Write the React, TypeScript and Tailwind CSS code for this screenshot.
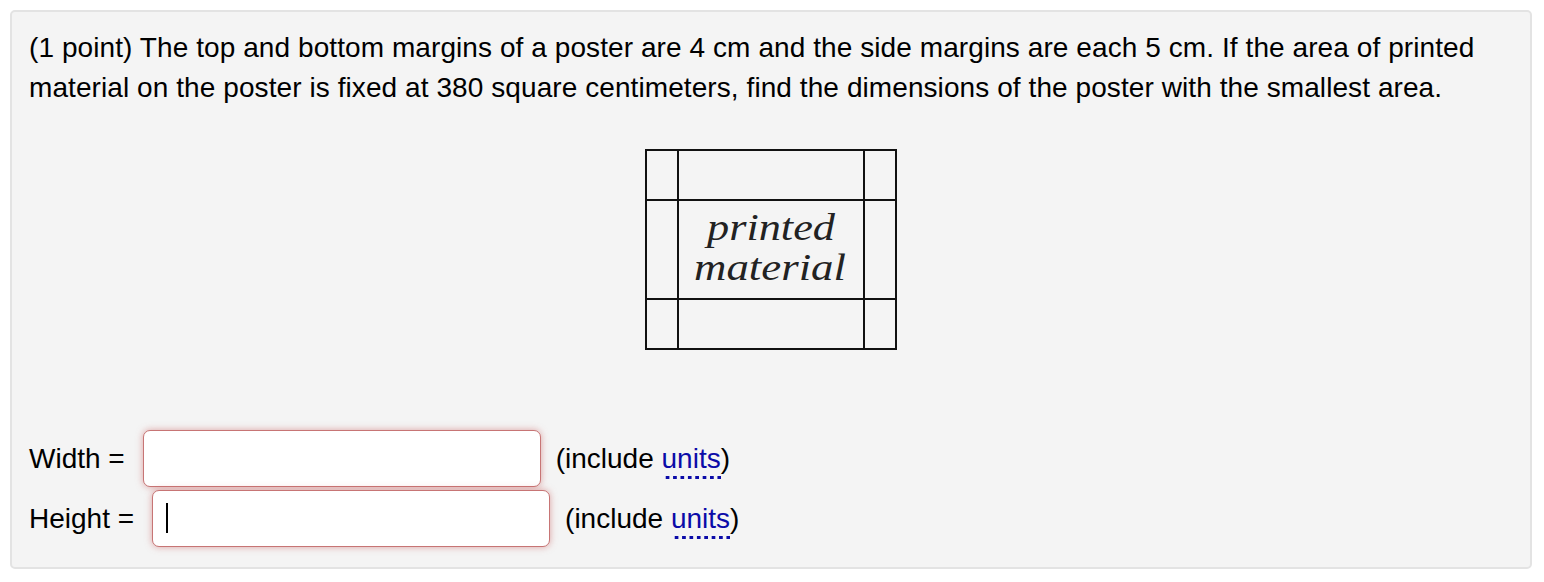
export default function App() {
  return (
    <div className="w-[1544px] h-[582px] bg-white pt-[10px] pl-[10px] font-['Liberation_Sans',Arial,sans-serif] text-black">
      <div className="w-[1522px] h-[559px] bg-[#f4f4f4] border-2 border-[#e3e3e3] rounded-[5px] px-[17px] pt-[16px]">
        <p className="text-[28px] leading-[40px] tracking-[0.08px]">
          (1 point) The top and bottom margins of a poster are 4 cm and the side margins are each 5 cm. If the area of printed
          material on the poster is fixed at 380 square centimeters, find the dimensions of the poster with the smallest area.
        </p>

        <div className="flex justify-center mt-[41px]">
          <svg width="252" height="201" viewBox="0 0 252 201">
            <g stroke="#111" strokeWidth="2" fill="none">
              <rect x="1" y="1" width="250" height="199" />
              <line x1="33" y1="1" x2="33" y2="200" />
              <line x1="219" y1="1" x2="219" y2="200" />
              <line x1="1" y1="51" x2="251" y2="51" />
              <line x1="1" y1="150" x2="251" y2="150" />
            </g>
            <g fontFamily="'Liberation Serif', 'DejaVu Serif', serif" fontStyle="italic" fontSize="38" fill="#222">
              <text x="62" y="91" textLength="128" lengthAdjust="spacingAndGlyphs">printed</text>
              <text x="49" y="131" textLength="152" lengthAdjust="spacingAndGlyphs">material</text>
            </g>
          </svg>
        </div>

        <div className="mt-[80px] flex flex-col gap-[3px] text-[28px]">
          <AnswerRow label="Width =" />
          <AnswerRow label="Height =" cursor />
        </div>
      </div>
    </div>
  );
}

function AnswerRow({ label, cursor }: { label: string; cursor?: boolean }) {
  return (
    <div className="flex items-center h-[57px]">
      <span className="mr-[18px]">{label}</span>
      <div className="relative w-[398px] h-[57px] bg-white border-[1.5px] border-[#c77575] rounded-[7px] shadow-[0_0_7px_rgba(200,95,95,0.55)]">
        {cursor && <span className="absolute left-[13px] top-[12px] w-[2px] h-[30px] bg-black" />}
      </div>
      <span className="ml-[15px]">
        (include{' '}
        <span className="text-[#0b0ba8] pb-[5px] bg-[linear-gradient(to_right,#0b0ba8_45%,transparent_45%)] bg-[length:7.4px_3px] bg-repeat-x bg-bottom">
          units
        </span>
        )
      </span>
    </div>
  );
}
